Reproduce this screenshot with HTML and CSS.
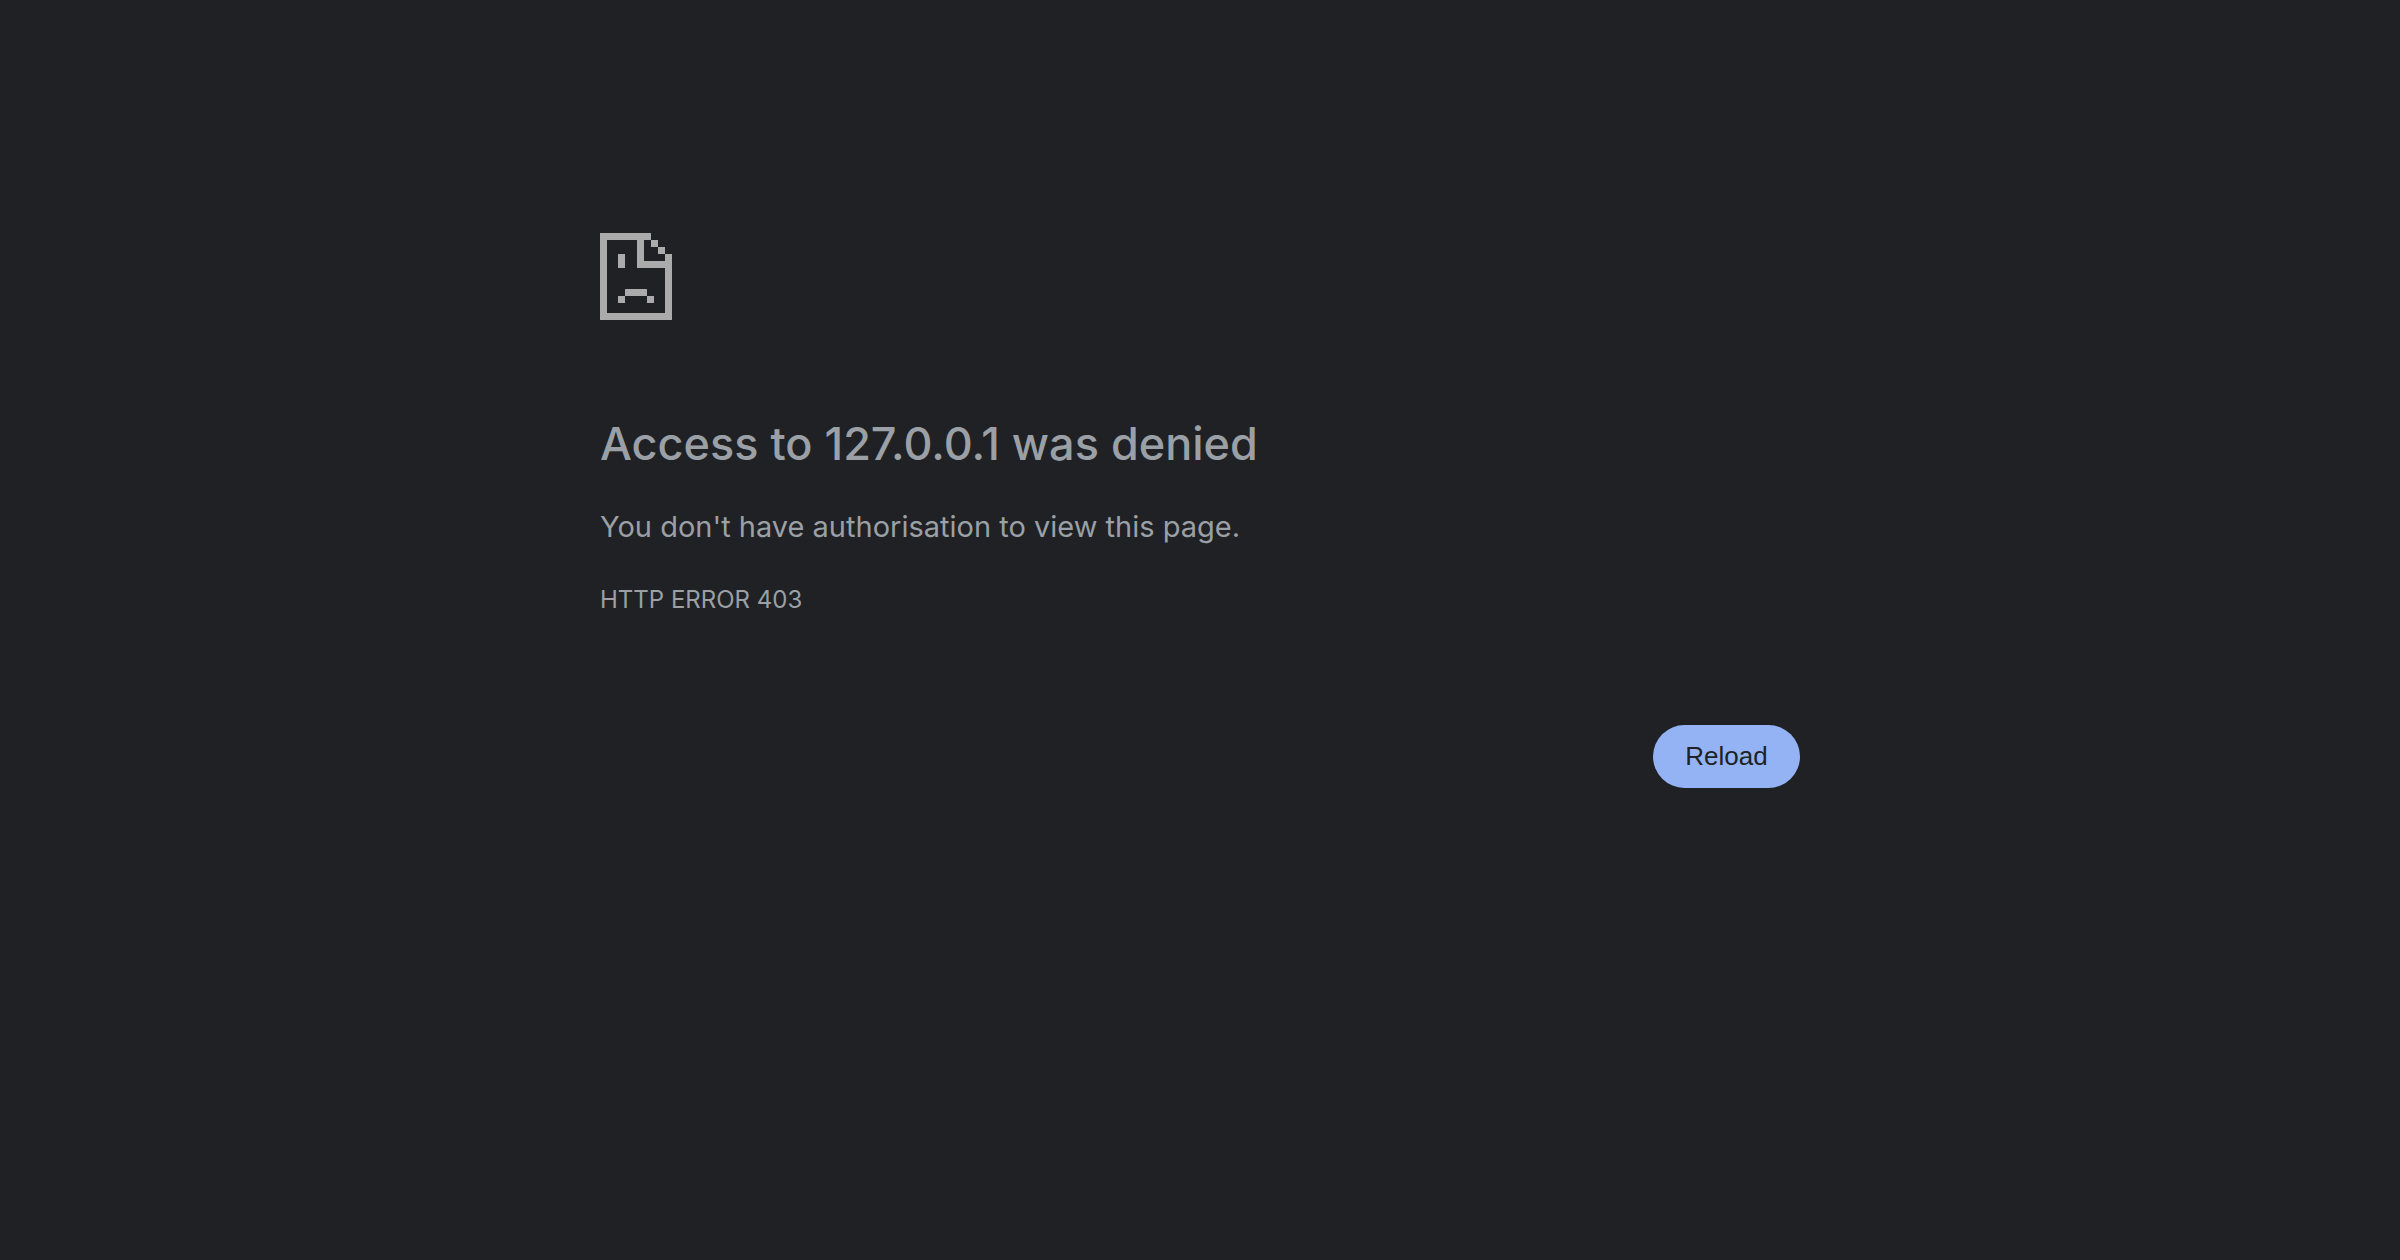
FILE: index.html
```html
<!DOCTYPE html>
<html lang="en-GB">
<head>
<meta charset="utf-8">
<meta name="viewport" content="width=device-width, initial-scale=1">
<title>127.0.0.1</title>
<link rel="stylesheet" href="styles.css">
</head>
<body>
<main class="error-page">
  <svg class="error-icon" viewBox="0 0 72 87" aria-hidden="true" shape-rendering="crispEdges">
    <path fill="currentColor" fill-rule="evenodd" d="M0 0H51V7H58V14H65V21H72V87H0ZM7 7V80H65V35H37V7ZM44 7V28H65V21H58V14H51V7Z"/>
    <path fill="currentColor" d="M18 21h7v14h-7zM25 56h22v7h-22zM18 63h7v7h-7zM47 63h7v7h-7z"/>
  </svg>
  <h1 class="title">Access to 127.0.0.1 was denied</h1>
  <p class="summary">You don't have authorisation to view this page.</p>
  <p class="error-code">HTTP ERROR 403</p>
  <div class="actions">
    <button class="reload" type="button">Reload</button>
  </div>
</main>
</body>
</html>
```
FILE: styles.css
```css
body {
  margin: 0;
  background: #202124;
  color: #9aa0a6;
  font-family: Inter, "Liberation Sans", sans-serif;
}

.error-page {
  box-sizing: border-box;
  width: 50%;
  min-width: 600px;
  margin: 0 auto;
  padding-top: 233px;
}

.error-icon {
  display: block;
  width: 72px;
  height: 87px;
  color: #ababab;
}

.title {
  margin: 94px 0 0;
  font-size: 45px;
  line-height: 60px;
  font-weight: 500;
}

.summary {
  margin: 30px 0 0;
  font-size: 29px;
  line-height: 46px;
}

.error-code {
  margin: 30px 0 0;
  font-size: 24px;
  line-height: 40px;
}

.actions {
  display: flex;
  justify-content: flex-end;
  margin-top: 105px;
}

.reload {
  min-width: 147px;
  padding: 16px 32px;
  border: 0;
  border-radius: 32px;
  background: #94b3f4;
  color: #202124;
  font-family: "Liberation Sans", Arial, sans-serif;
  font-size: 26px;
  line-height: 31px;
}
```
